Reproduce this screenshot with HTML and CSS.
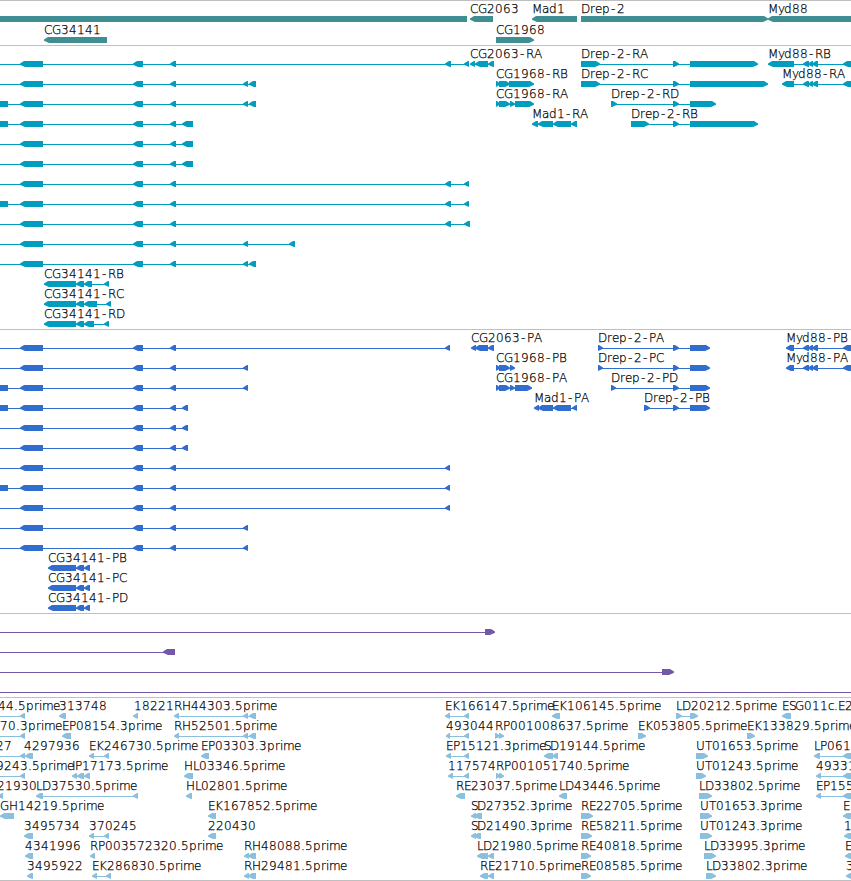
FILE: index.html
```
<!DOCTYPE html>
<html lang="en">
<head>
<meta charset="utf-8">
<title>Genome browser</title>
<link rel="stylesheet" href="styles.css">
</head>
<body>
<main class="browser">
<svg class="track genes" data-track="genes" data-pitch="21"></svg>
<svg class="track transcripts" data-track="transcripts" data-pitch="20"></svg>
<svg class="track proteins" data-track="proteins" data-pitch="20"></svg>
<svg class="track alignments" data-track="alignments" data-pitch="20"></svg>
<svg class="track ests" data-track="ests" data-pitch="20"></svg>
</main>
<script src="script.js"></script>
</body>
</html>
```
FILE: styles.css
```
body {
  margin: 0;
  background: #fff;
}

.browser {
  display: flex;
  flex-direction: column;
  width: 851px;
  height: 881px;
  overflow: hidden;
  box-sizing: border-box;
  border-bottom: 1px solid #bfbfbf;
}

.track {
  display: block;
  box-sizing: border-box;
  width: 100%;
  flex: none;
  border-top: 1px solid #bfbfbf;
  overflow: hidden;
}

.track text {
  font: 200 12px "DejaVu Sans Light", "DejaVu Sans", sans-serif;
  fill: #000;
  stroke: #000;
  stroke-width: 0.25px;
}

.genes { height: 45px; fill: #3f8e93; }
.transcripts { height: 284px; fill: #009dbf; }
.proteins { height: 284px; fill: #316dce; }
.alignments { height: 84px; fill: #7458a8; }
.ests { height: 183px; fill: #8abfdf; }
```
FILE: script.js
```
// Feature: "label @x direction start-end,start-end"; one array entry per row.
const body = '20-43,133-143,170-176';
const isoform = (tail, lead) => '< -40:-35,' + (lead ? '-20:8,' : '') + body + ',' + tail;

const tracks = {
  genes: [
    ['< -40:467', 'CG2063@470 < 470-493', 'Mad1@532 < 532-577', 'Drep-2@581 > 581-768', 'Myd88@768 < 768-870'],
    ['CG34141@44 < 44-107', 'CG1968@496 > 496-534']
  ],
  transcripts: [
    [isoform('445-451,464-469'), 'CG2063-RA@470 < 470-475,475-488,488-494', 'Drep-2-RA@581 > 581-600,673-679,690-758', 'Myd88-RB@768 < 768-794,803-809,808-813,812-818,843-860'],
    [isoform('243-248,249-256'), 'CG1968-RB@496 > 496-500,499-510,509-534', 'Drep-2-RC@581 > 581-600,673-679,690-768', 'Myd88-RA@782 < 782-794,803-809,808-813,812-818,843-860'],
    [isoform('243-248,249-256', true), 'CG1968-RA@496 > 496-500,499-510,510-515,515-534', 'Drep-2-RD@611 > 611-617,673-679,690-716'],
    [isoform('182-193', true), 'Mad1-RA@532 < 532-538,538-553,553-571,571-577', 'Drep-2-RB@631 > 631-649,673-679,690-758'],
    [isoform('182-193')],
    [isoform('182-193')],
    [isoform('445-451,464-469')],
    [isoform('445-451,464-469', true)],
    [isoform('445-451,464-470')],
    [isoform('243-248,289-295')],
    [isoform('243-248,249-256')],
    ['CG34141-RB@44 < 44-76,76-84,84-92,104-109'],
    ['CG34141-RC@44 < 44-76,76-84,84-97,106-111'],
    ['CG34141-RD@44 < 44-76,76-84,84-94,104-109']
  ],
  proteins: [
    [isoform('445-450'), 'CG2063-PA@471 < 471-476,475-488,488-494', 'Drep-2-PA@598 > 598-603,673-679,690-710', 'Myd88-PB@786 < 786-794,803-809,808-813,812-818,843-860'],
    [isoform('243-248'), 'CG1968-PB@496 > 496-500,499-510,510-515', 'Drep-2-PC@598 > 598-603,673-679,690-710', 'Myd88-PA@786 < 786-794,803-809,808-813,812-818,843-860'],
    [isoform('243-248', true), 'CG1968-PA@496 > 496-500,499-510,510-515,515-532', 'Drep-2-PD@611 > 611-616,673-679,690-710'],
    [isoform('182-188', true), 'Mad1-PA@534 < 534-539,538-553,553-571,572-577', 'Drep-2-PB@644 > 644-650,673-679,690-710'],
    [isoform('182-188')],
    [isoform('182-188')],
    [isoform('445-450')],
    [isoform('445-450', true)],
    [isoform('445-450')],
    [isoform('243-248')],
    [isoform('243-248')],
    ['CG34141-PB@48 < 48-76,76-84,84-90'],
    ['CG34141-PC@48 < 48-76,76-84,84-90'],
    ['CG34141-PD@48 < 48-76,76-84,84-90']
  ],
  alignments: [
    ['> -40:-35,485-495'],
    ['< -40:-35,163-175'],
    ['> -40:-35,662-674'],
    ['> -40:-35,870-880']
  ],
  ests: [
    ['44.5prime@-2 < -40:-35,20-25', '313748@59 < 59-66', '18221@134 < 133-138', 'RH44303.5prime@174 < 174-179,243-248,249-256', 'EK166147.5prime@445 < 445-450,464-469', 'EK106145.5prime@552 < 552-560', 'LD20212.5prime@676 > 676-682,690-698', 'ESG011c.E2@782 < 782-791'],
    ['70.3prime@0 < -40:-35,20-25', 'EP08154.3prime@62 < 62-71', 'RH52501.5prime@174 < 174-179,243-248,249-256', '493044@446 < 446-450,464-469', 'RP001008637.5prime@495 > 495-500,499-504', 'EK053805.5prime@638 > 638-646', 'EK133829.5prime@747 > 747-755'],
    ['27@-4 < -40:-35,20-25,25-33', '4297936@24', 'EK246730.5prime@89 < 89-94,104-109', 'EP03303.3prime@201 < 201-209', 'EP15121.3prime@446 < 446-451,464-469', 'SD19144.5prime@544 < 544-553,552-558', 'UT01653.5prime@696 > 696-708', 'LP061@814 < 814-820,843-860'],
    ['9243.5prime@-4 < -40:-35,20-25', 'IP17173.5prime@72 < 72-77,77-84,84-90', 'HL03346.5prime@184 < 184-193', '117574@448 < 448-453,464-469', 'RP001051740.5prime@496 > 496-500,499-504', 'UT01243.5prime@696 > 696-706', '49331@816 < 816-821,843-860'],
    ['21930@-3 < -2:3', 'LD37530.5prime@36 < 36-43,133-138', 'HL02801.5prime@186 < 186-192', 'RE23037.5prime@456 < 456-465', 'LD43446.5prime@559 < 559-567', 'LD33802.5prime@699 > 699-712', 'EP155@816 < 816-821,843-860'],
    ['GH14219.5prime@0 < 0-14', 'EK167852.5prime@208 < 208-216', 'SD27352.3prime@471 < 471-476,474-482', 'RE22705.5prime@581 > 581-593', 'UT01653.3prime@700 > 700-712', 'E@843 < 843-860'],
    ['3495734@24 < 24-33', '370245@89 < 89-94,104-109', '220430@208 < 208-216', 'SD21490.3prime@471 < 471-476,474-481', 'RE58211.5prime@581 > 581-592', 'UT01243.3prime@700 > 700-712', '1@844 < 844-860'],
    ['4341996@25 < 25-33', 'RP003572320.5prime@90 < 90-95', 'RH48088.5prime@244 < 244-249,248-256', 'LD21980.5prime@477 < 477-488,488-494', 'RE40818.5prime@581 > 581-591', 'LD33995.3prime@704 > 704-716', 'E@845 < 845-860'],
    ['3495922@27 < 27-33', 'EK286830.5prime@92 < 92-97,106-111', 'RH29481.5prime@244 < 244-249,248-256', 'RE21710.5prime@480 < 480-488,488-494', 'RE08585.5prime@581 > 581-591', 'LD33802.3prime@706 > 706-716', '3@846 < 846-860']
  ]
};

const advance = {
  '-': 7, '.': 4, A: 8, B: 8, C: 8, D: 9, E: 7, G: 9, H: 9, I: 3, K: 8, L: 6,
  M: 10, P: 7, R: 8, S: 6, T: 7, U: 9, a: 7, c: 6, d: 8, e: 7, i: 3, m: 11,
  p: 8, r: 5, y: 6
};

const SVG = 'http://www.w3.org/2000/svg';

function add(parent, name, attrs) {
  const el = document.createElementNS(SVG, name);
  for (const key in attrs) el.setAttribute(key, attrs[key]);
  parent.append(el);
  return el;
}

function drawLabel(svg, label, x, baseline) {
  const xs = [];
  for (const ch of label) {
    xs.push(ch === '-' ? x + 1 : x);
    x += advance[ch] || 8;
  }
  add(svg, 'text', { x: xs.join(' '), y: baseline }).textContent = label;
}

function drawExon(svg, dir, a, b, y) {
  const tip = Math.min(5, b - a);
  const [point, back, step] = dir === '<' ? [a, b, 1] : [b, a, -1];
  const points = [
    [point, y + 2.5], [point + step * (tip - 1), y], [back, y],
    [back, y + 6], [point + step * tip, y + 6], [point, y + 3.8]
  ];
  add(svg, 'polygon', { points: points.join(' ') });
}

for (const svg of document.querySelectorAll('.track')) {
  tracks[svg.dataset.track].forEach((row, i) => {
    const y = 15 + i * svg.dataset.pitch;
    for (const feature of row) {
      const [, label, x, dir, spans] = feature.match(/^(?:(\S+)@(-?\d+) ?)?(?:([<>]) (.+))?$/);
      if (spans) {
        const exons = spans.split(',').map(s => s.match(/^(-?\d+)[:-](-?\d+)$/).slice(1).map(Number));
        const start = exons[0][0];
        const end = exons[exons.length - 1][1];
        if (exons.length > 1) add(svg, 'rect', { x: start + 2, y: y + 3, width: end - start - 4, height: 1 });
        for (const [a, b] of exons) drawExon(svg, dir, a, b, y);
      }
      if (label) drawLabel(svg, label, Number(x), y - 3);
    }
  });
}
```
